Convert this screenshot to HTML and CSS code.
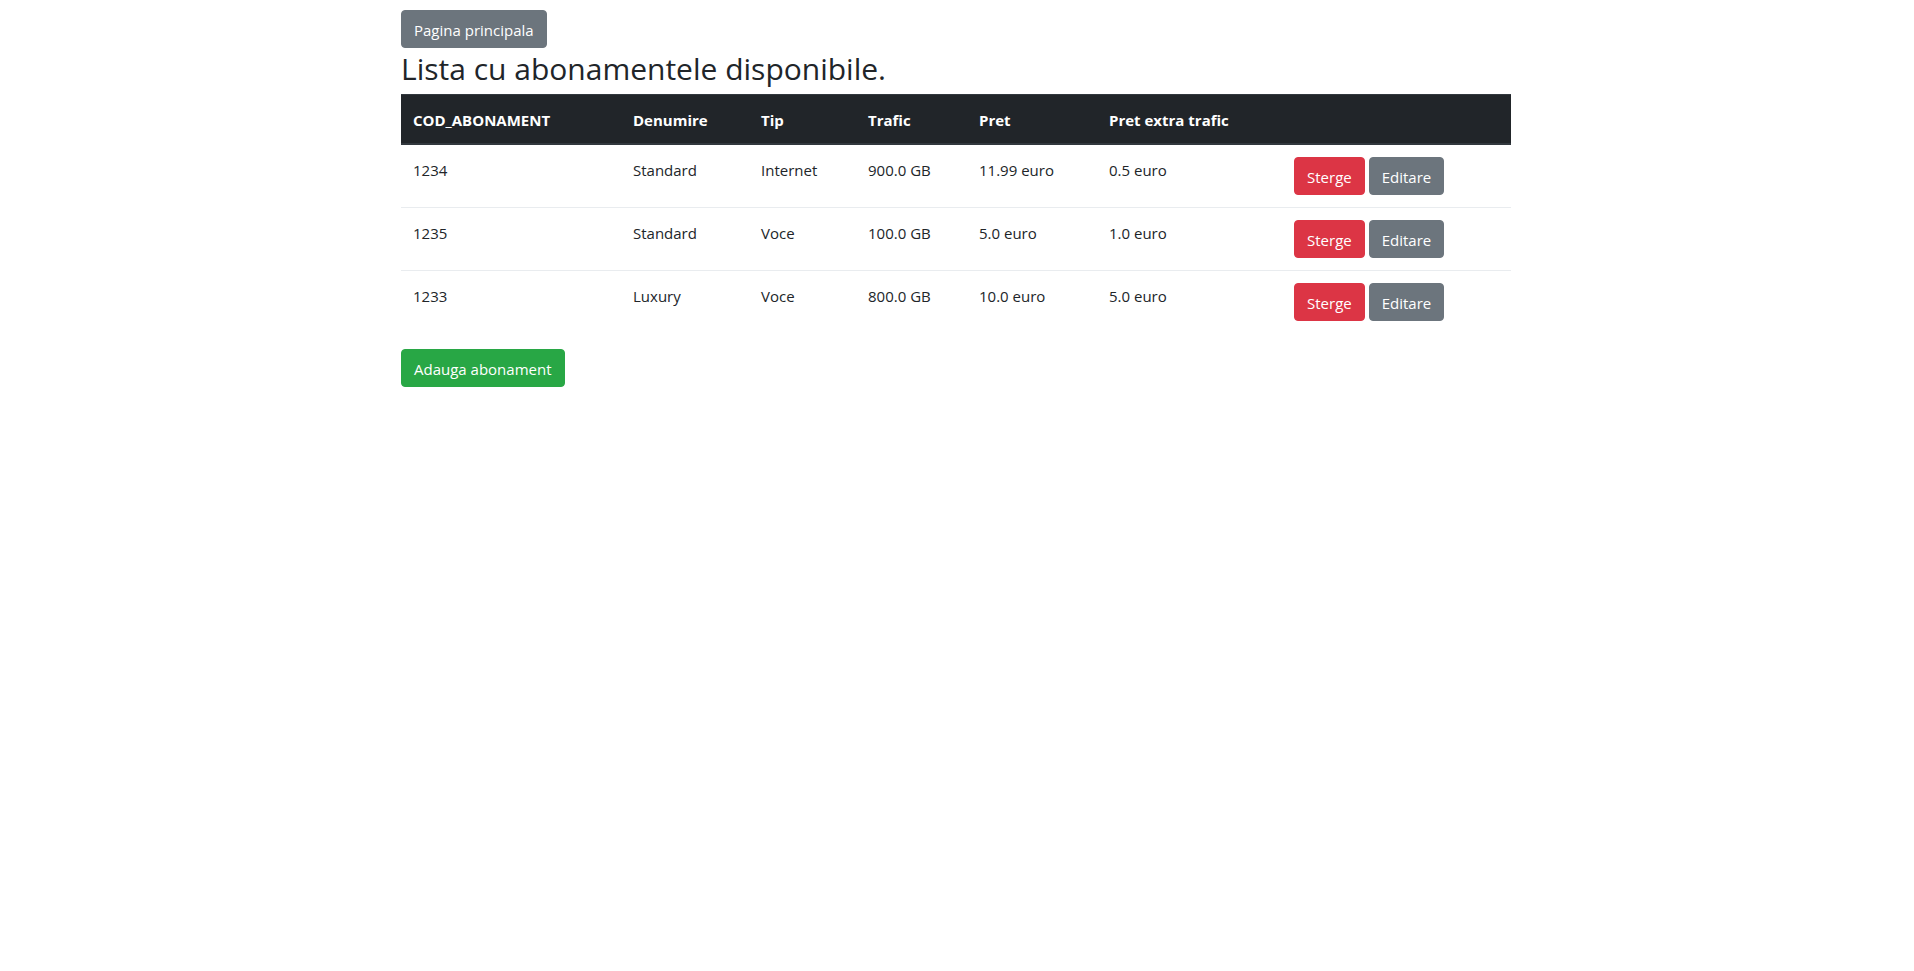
FILE: index.html
```html
<!DOCTYPE html>
<html lang="ro">
<head>
<meta charset="utf-8">
<title>Abonamente</title>
<link rel="stylesheet" href="styles.css">
</head>
<body>
<div class="container">
  <button class="btn btn-secondary top-btn">Pagina principala</button>
  <h2 class="title">Lista cu abonamentele disponibile.</h2>
  <table class="table">
    <colgroup>
      <col class="c-cod">
      <col class="c-den">
      <col class="c-tip">
      <col class="c-traf">
      <col class="c-pret">
      <col class="c-extra">
      <col class="c-act">
    </colgroup>
    <thead>
      <tr>
        <th>COD_ABONAMENT</th>
        <th>Denumire</th>
        <th>Tip</th>
        <th>Trafic</th>
        <th>Pret</th>
        <th>Pret extra trafic</th>
        <th></th>
      </tr>
    </thead>
    <tbody>
      <tr>
        <td>1234</td>
        <td>Standard</td>
        <td>Internet</td>
        <td>900.0 GB</td>
        <td>11.99 euro</td>
        <td>0.5 euro</td>
        <td><div class="actions"><button class="btn btn-danger">Sterge</button><button class="btn btn-secondary">Editare</button></div></td>
      </tr>
      <tr>
        <td>1235</td>
        <td>Standard</td>
        <td>Voce</td>
        <td>100.0 GB</td>
        <td>5.0 euro</td>
        <td>1.0 euro</td>
        <td><div class="actions"><button class="btn btn-danger">Sterge</button><button class="btn btn-secondary">Editare</button></div></td>
      </tr>
      <tr>
        <td>1233</td>
        <td>Luxury</td>
        <td>Voce</td>
        <td>800.0 GB</td>
        <td>10.0 euro</td>
        <td>5.0 euro</td>
        <td><div class="actions"><button class="btn btn-danger">Sterge</button><button class="btn btn-secondary">Editare</button></div></td>
      </tr>
    </tbody>
  </table>
  <button class="btn btn-success">Adauga abonament</button>
</div>
</body>
</html>
```

FILE: styles.css
```css
* { box-sizing: border-box; }
html, body {
  margin: 0;
  background: #fff;
}
body {
  font-family: "Open Sans", "Noto Sans", "Liberation Sans", sans-serif;
  font-size: 15px;
  line-height: 24px;
  color: #212529;
}
.container {
  width: 1112px;
  margin: 0 auto;
  padding: 10px 2px 0 0;
}
.btn {
  display: inline-block;
  font-family: inherit;
  font-size: 15px;
  line-height: 24px;
  padding: 7px 12px 5px;
  border: 1px solid transparent;
  border-radius: 4px;
  color: #fff;
  cursor: pointer;
  vertical-align: middle;
}
.btn-secondary { background: #6c757d; border-color: #6c757d; }
.btn-danger { background: #dc3545; border-color: #dc3545; }
.btn-success { background: #28a745; border-color: #28a745; }
.top-btn { display: block; }
.title {
  margin: 0 0 6px;
  padding-top: 2px;
  font-size: 30px;
  font-weight: 400;
  line-height: 38px;
}
.table {
  width: 100%;
  table-layout: fixed;
  border-collapse: collapse;
  margin-bottom: 16px;
}
.c-cod { width: 220px; }
.c-den { width: 128px; }
.c-tip { width: 107px; }
.c-traf { width: 111px; }
.c-pret { width: 130px; }
.c-extra { width: 185px; }
.c-act { width: 229px; }
.table th,
.table td {
  padding: 13px 12px 11px;
  text-align: left;
  vertical-align: top;
  border-top: 1px solid #e9ecef;
  white-space: nowrap;
}
.table thead th {
  background: #212529;
  color: #fff;
  font-weight: 700;
  border-color: #32383e;
  border-bottom: 2px solid #32383e;
  vertical-align: bottom;
}
.table tbody td:last-child {
  padding-top: 12px;
  padding-bottom: 12px;
}
.table tbody tr:first-child td { border-top: none; }
.actions {
  display: flex;
  gap: 4px;
}
```
